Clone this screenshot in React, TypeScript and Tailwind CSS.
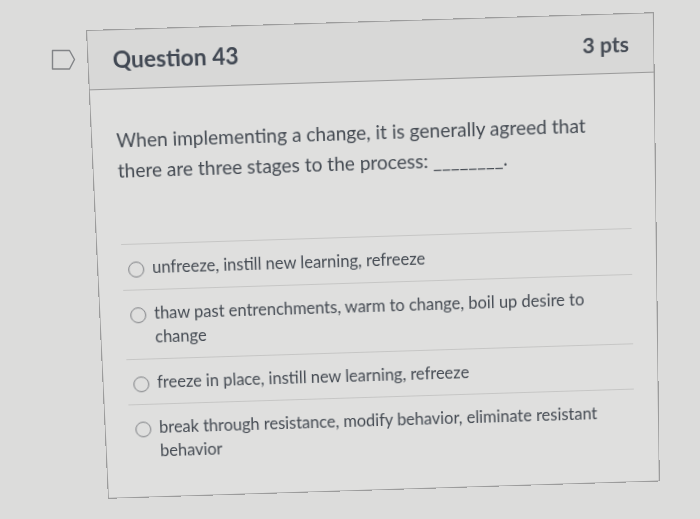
const options = [
  "unfreeze, instill new learning, refreeze",
  "thaw past entrenchments, warm to change, boil up desire to change",
  "freeze in place, instill new learning, refreeze",
  "break through resistance, modify behavior, eliminate resistant behavior",
];

function FlagIcon() {
  return (
    <svg width="25" height="22" viewBox="0 0 25 22" fill="none" className="shrink-0 mt-[25px]">
      <path d="M1.5 1.5 H18.5 L23.5 10.5 L18.5 20 H1.5 Z" stroke="#828487" strokeWidth="1.4" strokeLinejoin="round" />
    </svg>
  );
}

export default function App() {
  return (
    <div className="w-[700px] h-[519px] overflow-hidden bg-[#dcdcdb] flex pt-[24px] pl-[51px] perspective-[1000px] font-[Lato,sans-serif]">
      <FlagIcon />

      <div className="ml-[21px] w-[560px] h-[470px] shrink-0 border border-[#9c9c9c] bg-[#dfdfde] rotate-[-1.8deg] rotate-x-[-3.5deg]">
        <div className="h-[58px] flex items-center justify-between px-[24px] bg-[#d8d8d7] border-b border-[#9a9a9a]">
          <h2 className="text-[22.5px] font-bold text-[#414853]">Question 43</h2>
          <span className="text-[21px] font-bold text-[#474d56]">3 pts</span>
        </div>

        <div className="px-6 pt-[35px]">
          <p className="max-w-[500px] text-[19px] leading-[30px] text-[#454b53]">
            When implementing a change, it is generally agreed that there are three stages to the process: ________.
          </p>

          <div className="mt-[58px]">
            {options.map((text, i) => (
              <div key={i} className="flex items-start pl-[6px] pt-[11px] pb-[10px] border-t border-[#c6c6c5]">
                <span className="mt-[6px] w-[16px] h-[16px] shrink-0 rounded-full border-[1.5px] border-[#7e8084]" />
                <span className="ml-[8px] text-[16.5px] leading-[24px] text-[#454b53]">{text}</span>
              </div>
            ))}
          </div>
        </div>
      </div>
    </div>
  );
}
